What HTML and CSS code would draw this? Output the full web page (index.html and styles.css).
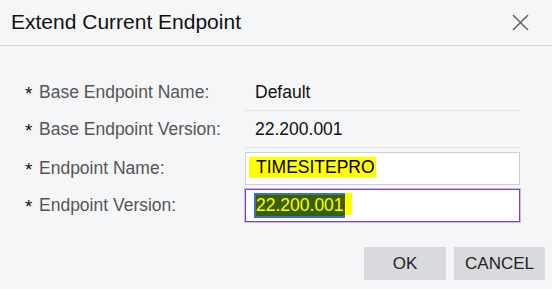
FILE: index.html
```html
<!DOCTYPE html>
<html lang="en">
<head>
	<meta charset="UTF-8">
	<title>Extend Current Endpoint</title>
	<link rel="stylesheet" href="styles.css">
</head>
<body>
	<div class="dialog">
		<div class="dlg-head">
			<span class="dlg-title">Extend Current Endpoint</span>
			<svg class="dlg-close" width="17" height="17" viewBox="0 0 17 17">
				<path d="M1 1 L16 16 M16 1 L1 16" stroke="#666" stroke-width="1.6" fill="none"/>
			</svg>
		</div>
		<div class="form">
			<div class="lbl"><span class="req">*</span>Base Endpoint Name:</div>
			<div class="val">Default</div>

			<div class="lbl"><span class="req">*</span>Base Endpoint Version:</div>
			<div class="val">22.200.001</div>

			<div class="lbl lbl-in"><span class="req">*</span>Endpoint Name:</div>
			<div class="field"><span class="mark">TIMESITEPRO</span></div>

			<div class="lbl lbl-in"><span class="req">*</span>Endpoint Version:</div>
			<div class="field focus"><span class="mark2"><span class="sel"><span class="mark-sel">22.200.001</span></span></span></div>
		</div>
		<div class="btns">
			<button class="btn btn-ok">OK</button>
			<button class="btn">CANCEL</button>
		</div>
	</div>
</body>
</html>
```

FILE: styles.css
```css
*{
	margin: 0;
	padding: 0;
	box-sizing: border-box;
}
body{
	background-color: #f5f6f8;
	font-family: "Liberation Sans", Arial, sans-serif;
	color: #111;
}
.dlg-head{
	height: 46px;
	display: flex;
	align-items: center;
	justify-content: space-between;
	padding: 0 23px 0 11px;
	border-bottom: 1px solid #d3d5d9;
}
.dlg-title{
	font-size: 21px;
	color: #111;
	margin-top: -1px;
}
.dlg-close{
	margin-top: 0;
}
.form{
	display: grid;
	grid-template-columns: 245px 275px;
	padding-top: 28px;
}
.lbl{
	display: flex;
	align-items: center;
	padding-left: 25px;
	font-size: 17.5px;
	color: #555;
}
.lbl-in{
	margin-top: 4px;
}
.req{
	color: #111;
	font-size: 19px;
	width: 14px;
	margin-top: 3px;
}
.val{
	height: 37px;
	line-height: 36px;
	padding-left: 10px;
	font-size: 17.5px;
	border-bottom: 1px dotted #cfd1d5;
}
.field{
	height: 33px;
	margin-top: 4px;
	background-color: #fff;
	border: 1px solid #cdcfd3;
	padding: 4px 0 0 3px;
	font-size: 17.5px;
	line-height: 21px;
}
.field.focus{
	border: 1px solid #7d45b0;
	box-shadow: 0 0 0 1px rgba(125,69,176,.35);
	padding-top: 3px;
}
.mark{
	display: inline-block;
	background-color: #ffff00;
	padding: 0 1px 0 7px;
	color: #000;
}
.mark2{
	display: inline-block;
	background-color: #ffff00;
	margin-left: 5px;
	padding-right: 7px;
	height: 22px;
}
.sel{
	display: inline-block;
	background-color: #3a6fd2;
	padding: 2px 0 0 3px;
	height: 25px;
}
.mark-sel{
	display: inline-block;
	background-color: #3a6000;
	color: #ffff00;
	margin-left: -1px;
	padding-right: 1px;
}
.btns{
	display: flex;
	justify-content: flex-end;
	gap: 8px;
	padding: 25px 7px 0 0;
}
.btn{
	height: 33px;
	border: 0;
	background-color: #d9dadd;
	font-family: "Liberation Sans", Arial, sans-serif;
	font-size: 17px;
	color: #222;
	width: 91px;
}
.btn-ok{
	width: 82px;
}
```
